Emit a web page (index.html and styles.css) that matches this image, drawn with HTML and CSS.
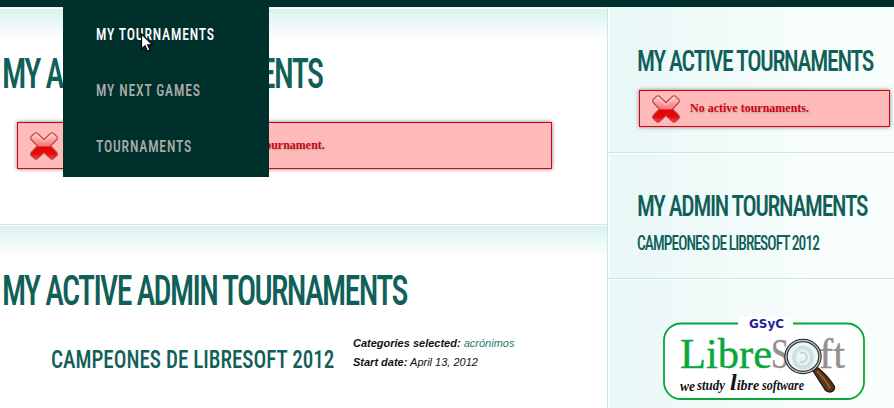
FILE: index.html
```html
<!DOCTYPE html>
<html lang="en">
<head>
<meta charset="utf-8">
<title>My tournaments</title>
<link rel="stylesheet" href="styles.css">
</head>
<body>
<svg class="defs" width="0" height="0" aria-hidden="true">
  <defs>
    <linearGradient id="red" x1="0" y1="0" x2="0" y2="1">
      <stop offset="0" stop-color="#ffd0d0"/>
      <stop offset=".48" stop-color="#f77a7a"/>
      <stop offset=".55" stop-color="#e60505"/>
      <stop offset=".8" stop-color="#e80808"/>
      <stop offset="1" stop-color="#f25050"/>
    </linearGradient>
    <symbol id="cross" viewBox="0 0 28 28">
      <path d="M5 .9Q6.500 .4 8 1.800L14 7.500L20 1.800Q21.500 .4 23 .9L27 4.700Q28 6.200 26.400 8L20.500 14L26.400 20Q28 21.800 27 23.300L23 27.100Q21.500 27.600 20 26.200L14 20.500L8 26.200Q6.500 27.600 5 27.100L1 23.300Q0 21.800 1.600 20L7.500 14L1.600 8Q0 6.200 1 4.700Z" fill="url(#red)" stroke="#b54040" stroke-width="1.1"/>
      <path d="M5.500 2.300L14 10L22.500 2.300" fill="none" stroke="#fff" stroke-opacity=".5"/>
    </symbol>
  </defs>
</svg>
<header class="topbar">
  <nav class="menu">
    <a class="active"><span>MY TOURNAMENTS</span></a>
    <a><span>MY NEXT GAMES</span></a>
    <a><span>TOURNAMENTS</span></a>
  </nav>
  <svg class="cursor" width="14" height="20" viewBox="0 0 14 20"><path d="M1.500 1V16L5 12.800L7.500 18.200L10 17L7.700 11.800H12.500Z" fill="#fff" stroke="#000" stroke-width="1.2"/></svg>
</header>
<div class="page">
  <main>
    <section class="panel first">
      <h1>MY ACTIVE TOURNAMENTS</h1>
      <div class="alert wide"><svg class="x"><use href="#cross"/></svg><span>You are not participating in any active tournament.</span></div>
    </section>
    <section class="panel">
      <h1>MY ACTIVE ADMIN TOURNAMENTS</h1>
      <div class="entry">
        <h2>CAMPEONES DE LIBRESOFT 2012</h2>
        <div class="meta">
          <p><b>Categories selected:</b> <a>acrónimos</a></p>
          <p><b>Start date:</b> April 13, 2012</p>
        </div>
      </div>
    </section>
  </main>
  <aside>
    <section class="box one">
      <h3>MY ACTIVE TOURNAMENTS</h3>
      <div class="alert small"><svg class="x"><use href="#cross"/></svg><span>No active tournaments.</span></div>
    </section>
    <section class="box two">
      <h3 class="admin">MY ADMIN TOURNAMENTS</h3>
      <h4>CAMPEONES DE LIBRESOFT 2012</h4>
    </section>
    <section class="box logo">
      <svg width="204" height="86" viewBox="0 0 204 86">
        <rect x="2" y="6.500" width="200" height="75.500" rx="17" fill="#fff" stroke="#0ca53c" stroke-width="1.800"/>
        <rect x="76" y="0" width="55" height="13" fill="#fff"/>
        <text x="87" y="11" class="gsyc" textLength="35" lengthAdjust="spacingAndGlyphs">GSyC</text>
        <text x="18" y="51" class="libre" textLength="92" lengthAdjust="spacingAndGlyphs">Libre</text>
        <text x="109" y="51" class="soft" textLength="18" lengthAdjust="spacingAndGlyphs">S</text>
        <text x="157" y="51" class="soft" textLength="26" lengthAdjust="spacingAndGlyphs">ft</text>
        <path d="M151 54L155.500 50.500Q166 59 172.500 69.500Q173 74 168 75Q164 75 162 71Z" fill="#5a3517" stroke="#211208" stroke-width="1.300"/>
        <path d="M155 54Q163 62 168 71" fill="none" stroke="#9a6b42" stroke-width="1.500"/>
        <ellipse cx="141" cy="39.500" rx="17" ry="16" fill="#e8f6f7" stroke="#222" stroke-width="3.400"/>
        <ellipse cx="141" cy="39.500" rx="17" ry="16" fill="none" stroke="#b9c0c0" stroke-width="1.400"/>
        <ellipse cx="141" cy="40.500" rx="9" ry="10" fill="none" stroke="#d0dfe0" stroke-width="4"/>
        <path d="M138 36Q144 34 145 40Q144 46 138 45" fill="none" stroke="#c4d6d8" stroke-width="2"/>
        <g class="ink">
          <text x="18" y="74" textLength="15" lengthAdjust="spacingAndGlyphs">we</text>
          <text x="35" y="73" textLength="28" lengthAdjust="spacingAndGlyphs">study</text>
          <text x="68" y="73"><tspan class="tall">l</tspan><tspan>ibre</tspan></text>
          <text x="100" y="73" textLength="42" lengthAdjust="spacingAndGlyphs">software</text>
        </g>
      </svg>
    </section>
  </aside>
</div>
</body>
</html>
```
FILE: styles.css
```css
* { box-sizing: border-box; }
body { margin: 0; width: 894px; height: 408px; overflow: hidden; background: #fff; font-family: "Liberation Sans", Arial, sans-serif; }
.defs { position: absolute; }
h1, h2, h3, h4, p { margin: 0; }
h1, h2, h3, h4, .menu span { font-family: Roboto, sans-serif; font-weight: 500; font-stretch: 75%; white-space: nowrap; transform-origin: 0 0; }
h1, h2, h3, h4 { color: #115f59; }
.topbar { height: 7px; background: #00302c; position: relative; z-index: 2; }
.menu { position: absolute; left: 63px; top: 0; width: 206px; height: 177px; background: #00302c; display: flex; flex-direction: column; padding: 6px 0 0 33px; }
.menu a { display: flex; align-items: center; height: 56px; color: #aaaca9; }
.menu span { font-size: 16.5px; letter-spacing: 1px; transform: scaleX(.83); }
.menu .active { color: #fff; }
.cursor { position: absolute; left: 140px; top: 33px; }
.page { display: flex; height: 401px; }
main { width: 607px; }
.panel { height: 184px; border-top: 1px solid #c8e9e3; background: linear-gradient(#dbf2ef, #fff) 0 1px / 100% 32px no-repeat; padding: 41px 0 0 2px; }
.first { height: 217px; border-top-color: #eaf7f5; }
h1 { font-size: 42px; line-height: 50px; transform: scaleX(.761); letter-spacing: -2.2px; }
.first h1 { transform: scaleX(.766); }
h2 { font-size: 26.5px; line-height: 32px; transform: scaleX(.797); width: 302px; }
h3 { font-size: 29.5px; line-height: 36px; transform: scaleX(.807); letter-spacing: -1.6px; }
.admin { transform: scaleX(.799); }
h4 { font-size: 20px; line-height: 24px; transform: scaleX(.771); letter-spacing: -1.2px; margin-top: 7px; }
.alert { display: flex; align-items: center; width: 535px; height: 47px; margin: 23px 0 0 15px; padding-left: 12px; gap: 10px; border: 1px solid #dc0012; background: #ffbaba; box-shadow: 0 0 4px #777; color: #d8000c; font: bold 12px "Liberation Serif", serif; text-shadow: 1px 1px 2px #aaa; }
.wide { word-spacing: -.9px; }
.x { width: 28px; height: 28px; flex: none; }
.entry { display: flex; padding: 18px 0 0 49px; }
.entry h2 { margin-top: 9px; }
.meta { font-size: 11px; line-height: 19px; font-style: italic; color: #111; white-space: nowrap; }
.meta a { color: #1c7c70; }
aside { width: 287px; border-left: 1px solid #c8e9e3; background: linear-gradient(90deg, #fff 1px, #e9f7f7 2px, #f8fefc 220px); }
.box { padding-left: 29px; border-bottom: 1px solid #c8e9e3; box-shadow: 0 1px #fff; }
.one { height: 146px; padding-top: 36px; }
.two { height: 126px; padding-top: 35px; }
.logo { height: 129px; border: 0; padding: 38px 0 0 54px; box-shadow: none; }
.small { width: 251px; height: 37px; margin: 11px 0 0 2px; }
.gsyc { font: bold 12px "DejaVu Sans", sans-serif; fill: #20209c; }
.libre { font: 42px "Liberation Serif", serif; fill: #0aa83c; stroke: #0aa83c; stroke-width: .4px; }
.soft { font: 42px "Liberation Serif", serif; fill: #929292; stroke: #929292; stroke-width: .4px; }
.ink { font: italic bold 14px "Liberation Serif", serif; fill: #111; }
.tall { font-size: 24px; }
```
